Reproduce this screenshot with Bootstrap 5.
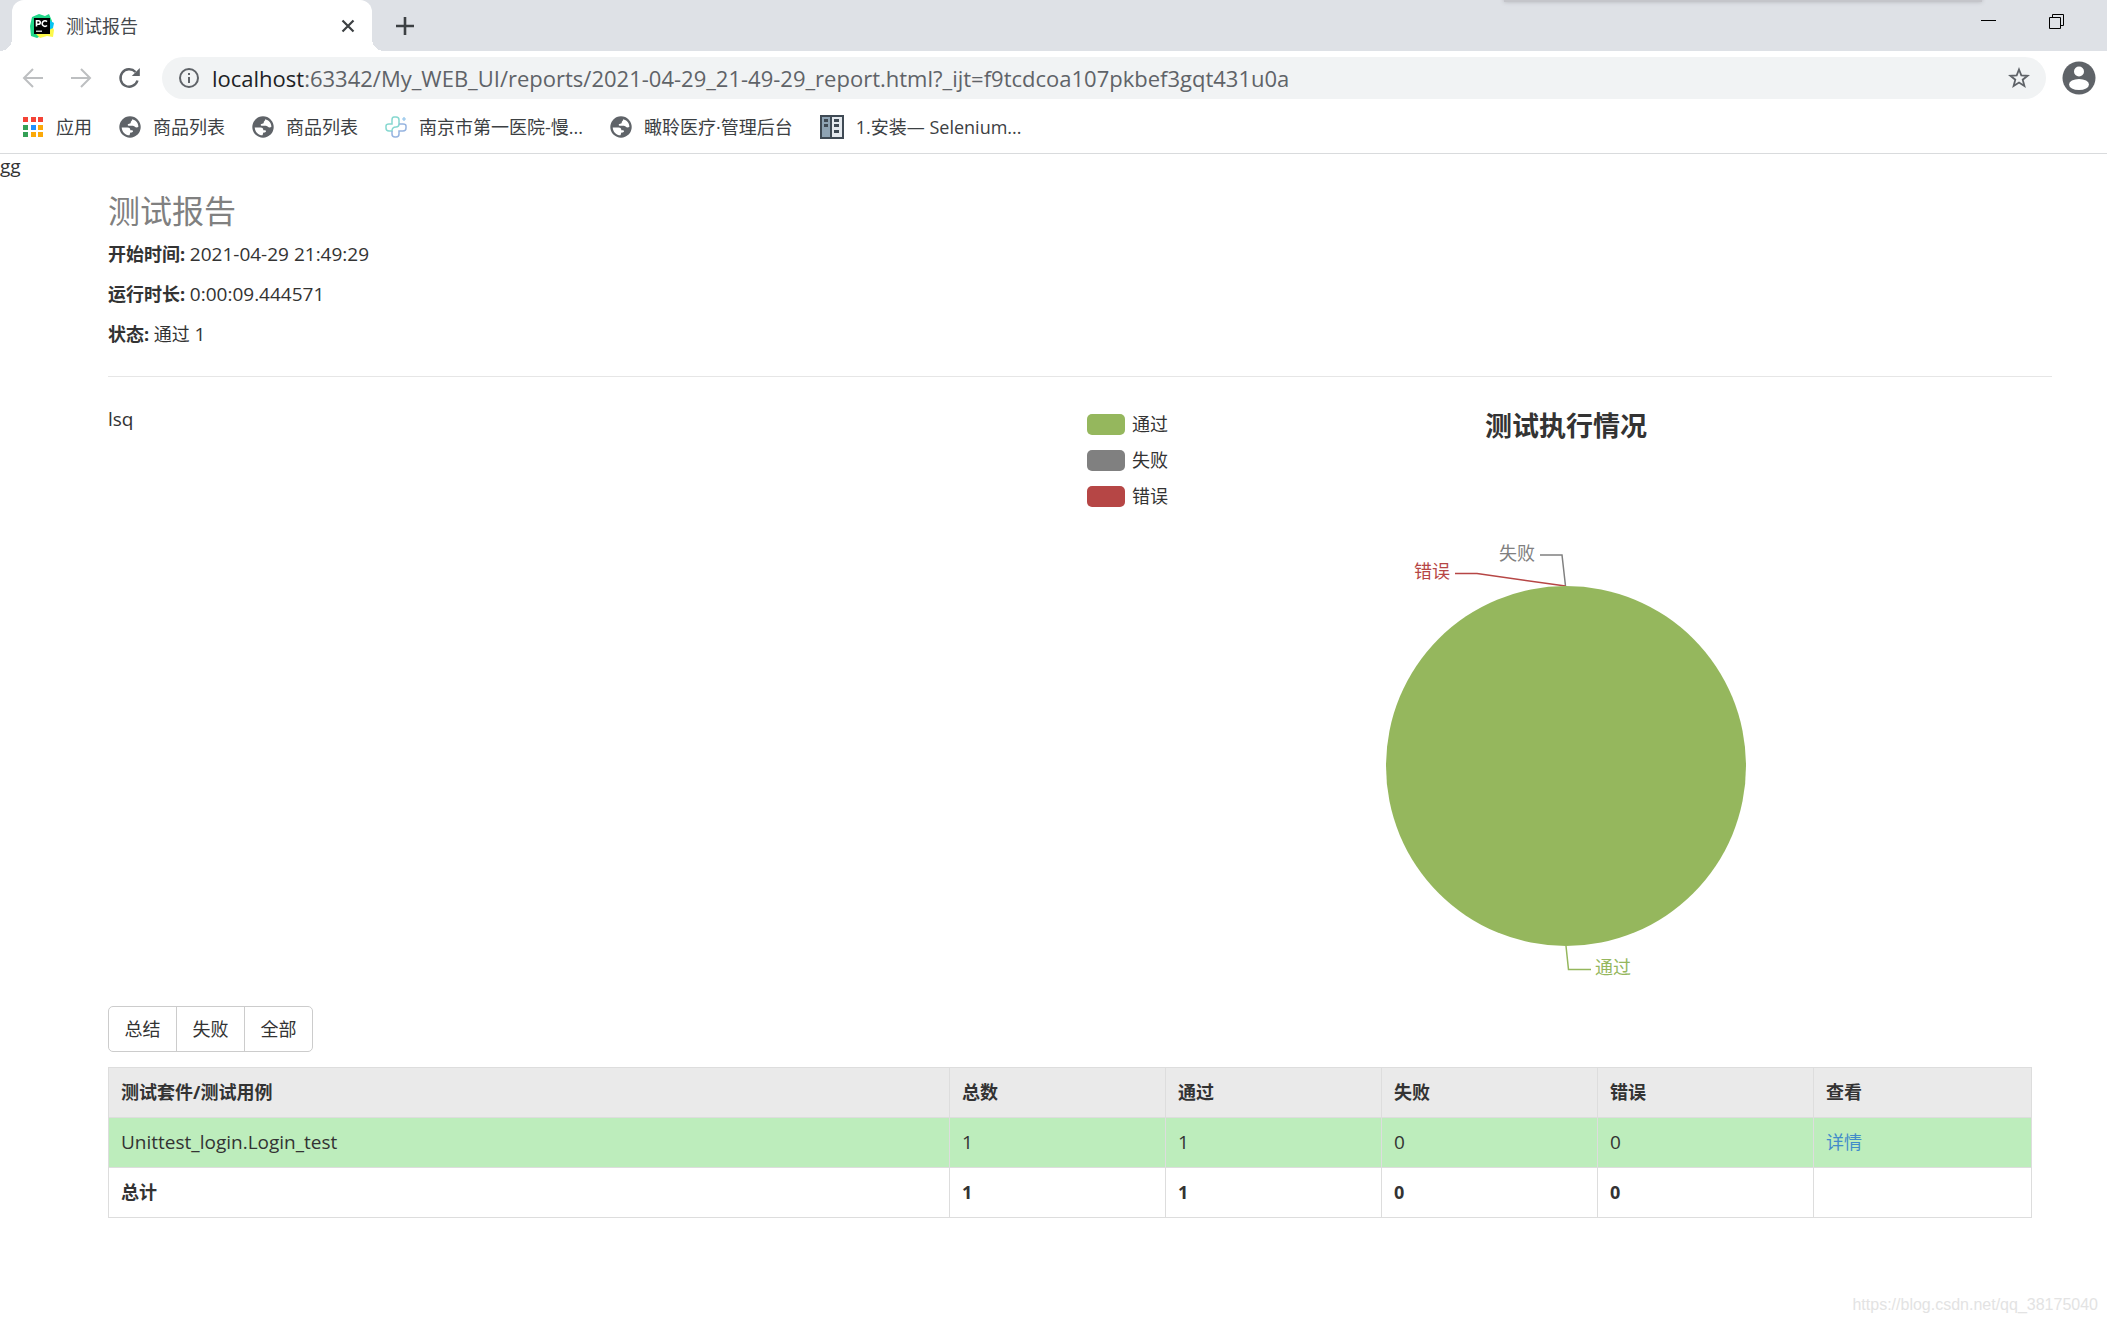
<!DOCTYPE html>
<html lang="zh-CN">
<head>
<meta charset="utf-8">
<meta name="viewport" content="width=device-width, initial-scale=1">
<title>测试报告</title>
<link href="https://cdn.jsdelivr.net/npm/bootstrap@5.3.0/dist/css/bootstrap.min.css" rel="stylesheet">
<style>
  body { font-family: "Open Sans", "Noto Sans CJK SC", sans-serif; font-size: 18px; line-height: 26px; color: #333; background: #fff; }
  svg { display: block; flex: none; }
  .latin { font-size: 19px; }
  .plain-btn { border: 0; background: none; padding: 0; color: #5f6368; display: flex; }

  /* browser window */
  .tab-strip { height: 51px; background: #dee1e6; padding-left: 12px; position: relative; }
  .page-tab { width: 360px; background: #fff; border-radius: 12px 12px 0 0; padding: 0 16px 0 18px; color: #45494d; position: relative; }
  .page-tab::before, .page-tab::after { content: ""; position: absolute; bottom: 0; width: 12px; height: 12px; }
  .page-tab::before { left: -12px; background: radial-gradient(circle at 0 0, #dee1e6 12px, #fff 12px); }
  .page-tab::after { right: -12px; background: radial-gradient(circle at 100% 0, #dee1e6 12px, #fff 12px); }
  .window-shadow { position: absolute; top: -8px; left: 71.4%; width: 478px; height: 10px; background: #c4c5ca; box-shadow: 0 0 4px #b4b6bb; }
  .window-ctl { gap: 53px; padding-right: 43px; margin-top: -9px; }
  .tool-row { padding: 6px 11px 6px 22px; }
  .nav-ctl { gap: 26px; margin-right: 21px; }
  .omnibox { height: 42px; border-radius: 21px; background: #f1f3f4; padding: 0 16px; margin-right: 16px; }
  .address { font-size: 22px; line-height: 30px; color: #5f6368; margin-left: 12px; white-space: nowrap; outline: 0; }
  .address b { font-weight: 400; color: #202124; }
  .bookmark-row { box-sizing: content-box; height: 44px; padding: 0 22px 4px; gap: 27px; border-bottom: 1px solid #d9dbdd; }
  .bookmark { color: #3c4043; text-decoration: none; gap: 12px; white-space: nowrap; }

  /* report */
  .note { line-height: 24px; }
  .report { padding: 0 55px 0 108px; }
  .report h1 { font-size: 32px; line-height: 36px; font-weight: 400; color: #808080; margin: 15px 0 12px; }
  .report p { margin-bottom: 14px; }
  .report hr { margin: 29px 0; border-color: #e6e6e6; opacity: 1; }
  .chart-head { display: grid; grid-template-columns: 1fr auto 1fr; padding: 0 7px; }
  .chart-head h2 { font-size: 27px; line-height: 34px; font-weight: 700; margin: 3px 0 0; }
  .legend-list { display: grid; gap: 10px; margin: 5px 0 0; padding: 0; list-style: none; }
  .legend-list li { display: flex; align-items: center; gap: 7px; }
  .swatch { width: 38px; height: 21px; border-radius: 5px; }
  .pass { background: #95b75d; }
  .fail { background: #808080; }
  .error { background: #b64645; }
  .pie { margin: 25px auto 0; }
  .pie text { font-size: 18px; }
  .filters { margin: 16px 0 15px; }
  .filters .btn { --bs-btn-color: #333; --bs-btn-border-color: #ccc; --bs-btn-hover-bg: #ebebeb; --bs-btn-hover-border-color: #adadad; --bs-btn-font-size: 18px; --bs-btn-line-height: 26px; --bs-btn-padding-x: 15px; --bs-btn-padding-y: 9px; --bs-btn-border-radius: 5px; min-width: 69px; }
  .result-wrap { margin-right: 20px; }
  .result { --bs-table-color: #333; color: #333; border-color: #ddd; table-layout: fixed; margin: 0; }
  .result > :not(caption) > * > * { padding: 12px; line-height: 25px; }
  .result .num { width: 216px; }
  .result .view { width: 218px; }
  .result .head-row > * { background: #eaeaea; }
  .result .pass-row > * { background: #bdedbc; }
  .result a { color: #428bca; text-decoration: none; }
  .watermark { position: absolute; right: 9px; bottom: 6px; font: 16px/26px "Liberation Sans", sans-serif; color: #e3e3e3; }
</style>
</head>
<body class="position-relative min-vh-100">

<svg width="0" height="0" class="position-absolute" aria-hidden="true">
  <symbol id="globe" viewBox="0 0 22 22">
    <circle cx="11" cy="11" r="10.7" fill="#5f6368"/>
    <path fill="#fff" d="M13 3.2C17 4 19.4 7.200 19.400 10.800C18.400 12 16.600 11.800 15.600 10.600C14.900 9.800 14.300 9.700 13.200 9.700H9.600C8.600 9.700 8.400 8.200 9.400 8L11 7.600C12.200 7.200 11.400 5.800 12.200 5.200C13 4.700 13.300 4 13 3.200Z"/>
    <path fill="#fff" d="M2.700 11.400H8.600C10.500 11.400 11.500 12.600 11.300 14.200H13.200C14.500 14.500 14.200 16.300 12.800 16.400L11.500 16.600C10.900 17.200 11 18.200 10.500 19.300C6.300 19.200 2.900 15.800 2.700 11.400Z"/>
  </symbol>
</svg>

<header>
  <div class="tab-strip d-flex">
    <div class="page-tab d-flex align-items-center">
      <svg width="24" height="24" viewBox="0 0 24 24" aria-hidden="true">
        <path fill="#21d789" d="M2 3L9 0L15 2L19 0L22 7L20 17L7 24L1 22L0 12Z"/>
        <path fill="#fcf84a" d="M20 8L24 16L23 23L17 22L10 24L6 20Z"/>
        <path fill="#07c3f2" d="M19 6L24 9L23 14L19 16Z"/>
        <rect x="4" y="4" width="16" height="16" fill="#000"/>
        <path fill="none" stroke="#fff" stroke-width="1.600" d="M6.500 12.500V6.700H8.500A1.700 1.700 0 0 1 8.500 10.200H6.500M17 7.600A2.800 2.800 0 1 0 17 11.500"/>
        <path stroke="#fff" stroke-width="1.200" d="M6 17.200H12"/>
      </svg>
      <span class="ms-2 ps-1">测试报告</span>
      <button class="plain-btn ms-auto" type="button" aria-label="关闭标签页">
        <svg width="16" height="16" viewBox="0 0 16 16"><path stroke="#3c4043" stroke-width="2.200" d="M2.500 2.500L13.500 13.500M13.500 2.500L2.500 13.500"/></svg>
      </button>
    </div>
    <button class="plain-btn ms-4 align-self-center" type="button" aria-label="新建标签页">
      <svg width="18" height="18" viewBox="0 0 18 18"><path stroke="#3c4043" stroke-width="2.600" d="M9 0V18M0 9H18"/></svg>
    </button>
    <div class="window-shadow"></div>
    <div class="window-ctl d-flex align-items-center ms-auto">
      <button class="plain-btn" type="button" aria-label="最小化"><svg width="15" height="15" viewBox="0 0 15 15"><path stroke="#000" d="M0 6.500H15"/></svg></button>
      <button class="plain-btn" type="button" aria-label="还原"><svg width="15" height="15" viewBox="0 0 15 15"><path fill="none" stroke="#000" d="M.5 3.500H11.500V14.500H.5ZM3.500 3.500V.5H14.500V11.500H11.500"/></svg></button>
    </div>
  </div>

  <div class="tool-row d-flex align-items-center">
    <div class="nav-ctl d-flex">
      <button class="plain-btn" type="button" aria-label="后退"><svg width="22" height="22" viewBox="0 0 22 22"><path fill="none" stroke="#bdbfc1" stroke-width="2" d="M21 11H2.500M11 2L2 11L11 20"/></svg></button>
      <button class="plain-btn" type="button" aria-label="前进"><svg width="22" height="22" viewBox="0 0 22 22"><path fill="none" stroke="#bdbfc1" stroke-width="2" d="M1 11H19.500M11 2L20 11L11 20"/></svg></button>
      <button class="plain-btn" type="button" aria-label="重新加载"><svg width="23" height="22" viewBox="0 0 23 22"><path fill="none" stroke="#5f6368" stroke-width="2.400" d="M19.500 13.500A8.700 8.700 0 1 1 17.500 5"/><path fill="#5f6368" d="M21.800 1V9H13.800Z"/></svg></button>
    </div>
    <div class="omnibox d-flex align-items-center flex-grow-1">
      <svg width="22" height="22" viewBox="0 0 22 22" aria-hidden="true"><circle cx="11" cy="11" r="9" fill="none" stroke="#5f6368" stroke-width="2"/><path stroke="#5f6368" stroke-width="2" d="M11 6V8M11 10V16"/></svg>
      <div class="address flex-grow-1" role="textbox" contenteditable="true" spellcheck="false" aria-label="地址栏"><b>localhost</b>:63342/My_WEB_UI/reports/2021-04-29_21-49-29_report.html?_ijt=f9tcdcoa107pkbef3gqt431u0a</div>
      <button class="plain-btn" type="button" aria-label="收藏"><svg width="22" height="22" viewBox="0 0 22 22"><path fill="none" stroke="#5f6368" stroke-width="1.800" d="M11 2.500L13.300 8.400L19.600 8.800L14.700 12.700L16.400 19L11 15.500L5.600 19L7.300 12.700L2.400 8.800L8.700 8.400Z"/></svg></button>
    </div>
    <button class="plain-btn" type="button" aria-label="用户"><svg width="34" height="34" viewBox="0 0 34 34"><circle cx="17" cy="17" r="16.500" fill="#5f6368"/><circle cx="17" cy="10.500" r="5" fill="#fff"/><ellipse cx="17" cy="23.500" rx="10" ry="5.500" fill="#fff"/></svg></button>
  </div>

  <nav class="bookmark-row d-flex align-items-center" aria-label="书签">
    <a class="bookmark d-flex align-items-center" href="#">
      <svg width="22" height="22" viewBox="0 0 22 22" aria-hidden="true"><path fill="#f44336" d="M1 1h5v5H1zM9 1h5v5H9zM16 1h5v5h-5z"/><path fill="#34a056" d="M1 9h5v5H1zM1 16h5v5H1z"/><path fill="#1e90ff" d="M9 9h5v5H9z"/><path fill="#fba909" d="M16 9h5v5h-5zM9 16h5v5H9zM16 16h5v5h-5z"/></svg>
      <span>应用</span></a>
    <a class="bookmark d-flex align-items-center" href="#"><svg width="22" height="22" aria-hidden="true"><use href="#globe"/></svg><span>商品列表</span></a>
    <a class="bookmark d-flex align-items-center" href="#"><svg width="22" height="22" aria-hidden="true"><use href="#globe"/></svg><span>商品列表</span></a>
    <a class="bookmark d-flex align-items-center" href="#">
      <svg width="22" height="22" viewBox="0 0 22 22" fill="none" stroke-width="1.500" aria-hidden="true"><path stroke="#86d8d0" d="M7 15H4Q1 15 1 12V10Q1 8 4 8H7V4Q7 1 9 1H11Q14 1 14 4V8Q14 11 11 11Q7 11 7 15Z"/><path stroke="#96b4e0" d="M14 8H18Q21 8 21 10V12Q21 15 18 15H14V18Q14 21 11 21H10Q7 21 7 18V15"/><path stroke="#8fc3ea" stroke-width="1.200" d="M19 1V5M17 3H21"/></svg>
      <span>南京市第一医院-慢...</span></a>
    <a class="bookmark d-flex align-items-center" href="#"><svg width="22" height="22" aria-hidden="true"><use href="#globe"/></svg><span>瞰聆医疗·管理后台</span></a>
    <a class="bookmark d-flex align-items-center" href="#">
      <svg width="24" height="24" viewBox="0 0 24 24" aria-hidden="true"><path fill="#3f4a54" d="M0 0h24v24H0z"/><path fill="#8ea3b3" d="M2 2h8v20H2z"/><path fill="#e4e9ee" d="M12 2h10v20H12z"/><path fill="#3f4a54" d="M4 4h4v3H4zM4 9h4v3H4zM14 4h5v3h-5zM14 9h5v3h-5zM14 15h5v3h-5z"/></svg>
      <span>1.安装— Selenium...</span></a>
  </nav>
</header>

<div class="note latin">gg</div>
<main class="report">
  <h1>测试报告</h1>
  <p><strong>开始时间:</strong> <span class="latin">2021-04-29 21:49:29</span></p>
  <p><strong>运行时长:</strong> <span class="latin">0:00:09.444571</span></p>
  <p><strong>状态:</strong> 通过 <span class="latin">1</span></p>
  <hr>
  <div class="row g-0">
    <div class="col-6 latin">lsq</div>
    <div class="col-6">
      <div class="chart-head">
        <ul class="legend-list">
          <li><span class="swatch pass"></span>通过</li>
          <li><span class="swatch fail"></span>失败</li>
          <li><span class="swatch error"></span>错误</li>
        </ul>
        <h2>测试执行情况</h2>
      </div>
      <svg class="pie" width="400" height="456" viewBox="0 0 400 456" role="img" aria-label="测试执行情况饼图">
        <g fill="none" stroke-width="1.500">
          <path stroke="#808080" d="M174 21H196L199.500 52"/>
          <path stroke="#b64645" d="M89 39.500H111L199.500 52"/>
          <path stroke="#95b75d" d="M200 412L202.500 435.500H225"/>
        </g>
        <circle cx="200" cy="232" r="180" fill="#95b75d"/>
        <text x="133" y="26" fill="#808080">失败</text>
        <text x="48" y="44" fill="#b64645">错误</text>
        <text x="229" y="440" fill="#95b75d">通过</text>
      </svg>
    </div>
  </div>

  <div class="btn-group filters d-inline-flex" role="group" aria-label="筛选">
    <button type="button" class="btn">总结</button>
    <button type="button" class="btn">失败</button>
    <button type="button" class="btn">全部</button>
  </div>

  <div class="result-wrap">
    <table class="table table-bordered result">
      <thead>
        <tr class="head-row"><th scope="col">测试套件/测试用例</th><th scope="col" class="num">总数</th><th scope="col" class="num">通过</th><th scope="col" class="num">失败</th><th scope="col" class="num">错误</th><th scope="col" class="view">查看</th></tr>
      </thead>
      <tbody>
        <tr class="pass-row"><td class="latin">Unittest_login.Login_test</td><td class="latin">1</td><td class="latin">1</td><td class="latin">0</td><td class="latin">0</td><td><a href="#">详情</a></td></tr>
      </tbody>
      <tfoot>
        <tr><th scope="row">总计</th><th>1</th><th>1</th><th>0</th><th>0</th><td></td></tr>
      </tfoot>
    </table>
  </div>
</main>
<div class="watermark">https://blog.csdn.net/qq_38175040</div>

<script src="https://cdn.jsdelivr.net/npm/bootstrap@5.3.0/dist/js/bootstrap.bundle.min.js"></script>
</body>
</html>
